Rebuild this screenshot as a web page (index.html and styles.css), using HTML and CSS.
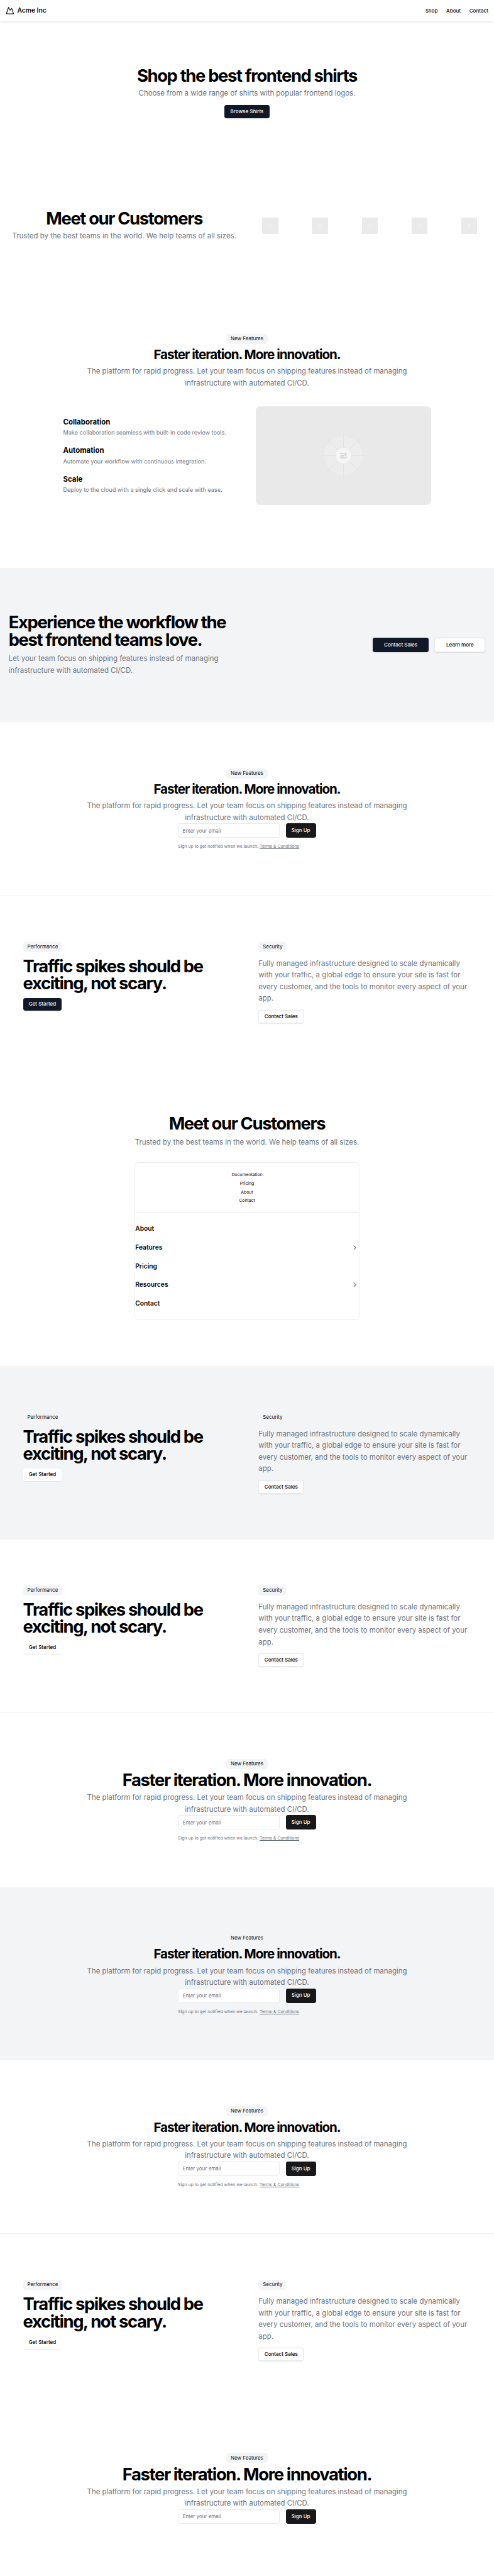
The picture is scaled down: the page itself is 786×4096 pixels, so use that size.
FILE: index.html
```html
<!DOCTYPE html>
<html lang="en">
<head>
<meta charset="utf-8">
<title>Acme Inc</title>
<link rel="stylesheet" href="styles.css">
</head>
<body>
<header class="header">
  <a class="brand"><svg class="icon" viewBox="0 0 24 24"><path d="m8 3 4 8 5-5 5 15H2L8 3z"/></svg><span>Acme Inc</span></a>
  <nav class="nav"><a>Shop</a><a>About</a><a>Contact</a></nav>
</header>
<main>
<section class="section hero">
  <h1 class="title">Shop the best frontend shirts</h1>
  <p class="lead gap-s">Choose from a wide range of shirts with popular frontend logos.</p>
  <a class="btn dark gap-l">Browse Shirts</a>
</section>

<section class="section customers">
  <div class="center">
    <h2 class="title">Meet our Customers</h2>
    <p class="lead gap-s">Trusted by the best teams in the world. We help teams of all sizes.</p>
  </div>
  <div class="logos"><i class="logo"></i><i class="logo"></i><i class="logo"></i><i class="logo"></i><i class="logo"></i></div>
</section>

<section class="section features">
  <div class="intro">
    <span class="badge">New Features</span>
    <h2 class="title small gap-s">Faster iteration. More innovation.</h2>
    <p class="lead gap-s">The platform for rapid progress. Let your team focus on shipping features instead of managing infrastructure with automated CI/CD.</p>
  </div>
  <div class="feature-grid">
    <ul class="feature-list">
      <li><h3>Collaboration</h3><p>Make collaboration seamless with built-in code review tools.</p></li>
      <li><h3>Automation</h3><p>Automate your workflow with continuous integration.</p></li>
      <li><h3>Scale</h3><p>Deploy to the cloud with a single click and scale with ease.</p></li>
    </ul>
    <div class="picture">
      <svg class="picture-art" viewBox="-90 -90 180 180">
        <defs><radialGradient id="fade" gradientUnits="userSpaceOnUse" cx="0" cy="0" r="105"><stop offset="0" stop-color="#cfcfcf"/><stop offset=".35" stop-color="#d8d8d8"/><stop offset=".72" stop-color="#e9e9e9"/></radialGradient></defs>
        <circle r="55" fill="#ededed" stroke="#e4e4e4"/>
        <path d="M-75 0H75M0-75V75M-75-75L75 75M-75 75L75-75" stroke="url(#fade)" fill="none"/>
        <circle r="23" fill="#f5f5f5" stroke="#dedede"/>
        <g fill="none" stroke="#a9a9a9" stroke-width="1.3"><rect x="-7" y="-6.5" width="14" height="13"/><path d="M-7 2.5 -3 .5 0 1 3-3 7 1M-1 0 2 3"/></g>
      </svg>
    </div>
  </div>
</section>

<section class="section muted cta">
  <div class="cta-text">
    <h2 class="title">Experience the workflow the best frontend teams love.</h2>
    <p class="lead gap-m">Let your team focus on shipping features instead of managing infrastructure with automated CI/CD.</p>
  </div>
  <div class="actions"><a class="btn dark large">Contact Sales</a><a class="btn outline large">Learn more</a></div>
</section>

<section class="section">
  <div class="intro">
    <span class="badge">New Features</span>
    <h2 class="title small gap-s">Faster iteration. More innovation.</h2>
    <p class="lead gap-s">The platform for rapid progress. Let your team focus on shipping features instead of managing infrastructure with automated CI/CD.</p>
  </div>
  <form class="signup">
    <div class="signup-row"><input class="input" type="email" placeholder="Enter your email"><button class="btn black" type="button">Sign Up</button></div>
    <p class="terms">Sign up to get notified when we launch. <a>Terms &amp; Conditions</a></p>
  </form>
</section>

<section class="section split ruled">
  <div class="column">
    <span class="badge">Performance</span>
    <h2 class="title">Traffic spikes should be exciting, not scary.</h2>
    <a class="btn dark">Get Started</a>
  </div>
  <div class="column">
    <span class="badge">Security</span>
    <p class="lead">Fully managed infrastructure designed to scale dynamically with your traffic, a global edge to ensure your site is fast for every customer, and the tools to monitor every aspect of your app.</p>
    <a class="btn outline">Contact Sales</a>
  </div>
</section>

<section class="section directory">
  <h2 class="title">Meet our Customers</h2>
  <p class="lead gap-m">Trusted by the best teams in the world. We help teams of all sizes.</p>
  <div class="card">
    <div class="card-links"><a>Documentation</a><a>Pricing</a><a>About</a><a>Contact</a></div>
    <ul class="menu">
      <li>About</li>
      <li>Features<svg class="icon chevron" viewBox="0 0 24 24"><path d="m9 18 6-6-6-6"/></svg></li>
      <li>Pricing</li>
      <li>Resources<svg class="icon chevron" viewBox="0 0 24 24"><path d="m9 18 6-6-6-6"/></svg></li>
      <li>Contact</li>
    </ul>
  </div>
</section>

<section class="section split muted">
  <div class="column">
    <span class="badge">Performance</span>
    <h2 class="title">Traffic spikes should be exciting, not scary.</h2>
    <a class="btn light">Get Started</a>
  </div>
  <div class="column">
    <span class="badge">Security</span>
    <p class="lead">Fully managed infrastructure designed to scale dynamically with your traffic, a global edge to ensure your site is fast for every customer, and the tools to monitor every aspect of your app.</p>
    <a class="btn outline">Contact Sales</a>
  </div>
</section>

<section class="section split">
  <div class="column">
    <span class="badge">Performance</span>
    <h2 class="title">Traffic spikes should be exciting, not scary.</h2>
    <a class="btn light">Get Started</a>
  </div>
  <div class="column">
    <span class="badge">Security</span>
    <p class="lead">Fully managed infrastructure designed to scale dynamically with your traffic, a global edge to ensure your site is fast for every customer, and the tools to monitor every aspect of your app.</p>
    <a class="btn outline">Contact Sales</a>
  </div>
</section>

<section class="section ruled">
  <div class="intro">
    <span class="badge">New Features</span>
    <h2 class="title gap-s">Faster iteration. More innovation.</h2>
    <p class="lead gap-s">The platform for rapid progress. Let your team focus on shipping features instead of managing infrastructure with automated CI/CD.</p>
  </div>
  <form class="signup">
    <div class="signup-row"><input class="input" type="email" placeholder="Enter your email"><button class="btn black" type="button">Sign Up</button></div>
    <p class="terms">Sign up to get notified when we launch. <a>Terms &amp; Conditions</a></p>
  </form>
</section>

<section class="section muted">
  <div class="intro">
    <span class="badge">New Features</span>
    <h2 class="title small gap-s">Faster iteration. More innovation.</h2>
    <p class="lead gap-s">The platform for rapid progress. Let your team focus on shipping features instead of managing infrastructure with automated CI/CD.</p>
  </div>
  <form class="signup">
    <div class="signup-row"><input class="input" type="email" placeholder="Enter your email"><button class="btn black" type="button">Sign Up</button></div>
    <p class="terms">Sign up to get notified when we launch. <a>Terms &amp; Conditions</a></p>
  </form>
</section>

<section class="section">
  <div class="intro">
    <span class="badge">New Features</span>
    <h2 class="title small gap-s">Faster iteration. More innovation.</h2>
    <p class="lead gap-s">The platform for rapid progress. Let your team focus on shipping features instead of managing infrastructure with automated CI/CD.</p>
  </div>
  <form class="signup">
    <div class="signup-row"><input class="input" type="email" placeholder="Enter your email"><button class="btn black" type="button">Sign Up</button></div>
    <p class="terms">Sign up to get notified when we launch. <a>Terms &amp; Conditions</a></p>
  </form>
</section>

<section class="section split ruled">
  <div class="column">
    <span class="badge">Performance</span>
    <h2 class="title">Traffic spikes should be exciting, not scary.</h2>
    <a class="btn light">Get Started</a>
  </div>
  <div class="column">
    <span class="badge">Security</span>
    <p class="lead">Fully managed infrastructure designed to scale dynamically with your traffic, a global edge to ensure your site is fast for every customer, and the tools to monitor every aspect of your app.</p>
    <a class="btn outline">Contact Sales</a>
  </div>
</section>

<section class="section last">
  <div class="intro">
    <span class="badge">New Features</span>
    <h2 class="title gap-s">Faster iteration. More innovation.</h2>
    <p class="lead gap-s">The platform for rapid progress. Let your team focus on shipping features instead of managing infrastructure with automated CI/CD.</p>
  </div>
  <form class="signup">
    <div class="signup-row"><input class="input" type="email" placeholder="Enter your email"><button class="btn black" type="button">Sign Up</button></div>
  </form>
</section>
</main>
</body>
</html>
```
FILE: styles.css
```css
/* 1rem is ten design pixels */
html { font-size: 5.7135px; }
*, *::before, *::after { box-sizing: border-box; margin: 0; padding: 0; }
body { font-family: Inter, "Liberation Sans", sans-serif; font-size: 1.6rem; line-height: 1.5; color: #09090b; background: #fff; overflow-x: hidden; }
ul { list-style: none; }

.icon { width: 2.4rem; height: 2.4rem; flex: none; fill: none; stroke: currentColor; stroke-width: 2; stroke-linecap: round; stroke-linejoin: round; }
.icon.chevron { width: 2rem; height: 2rem; }

.header { display: flex; align-items: center; justify-content: space-between; height: 6rem; padding: 0 1.6rem; box-shadow: 0 .4rem .6rem -.1rem rgba(0,0,0,.1), 0 .2rem .4rem -.2rem rgba(0,0,0,.1); }
.brand { display: flex; align-items: center; gap: .8rem; font-size: 1.8rem; font-weight: 600; }
.nav { display: flex; gap: 2.4rem; font-size: 1.4rem; font-weight: 500; }

.section { padding: 12.8rem 2.4rem; }
.muted { background: #f3f4f6; }
.ruled { border-top: 1px solid #eeeff1; padding-top: 12.75rem; }
.center { text-align: center; }

.title { font-size: 4.8rem; line-height: 1; font-weight: 700; letter-spacing: -.05em; color: #000; }
.title.small { font-size: 3.6rem; line-height: 1.25; }
.lead { font-size: 2rem; line-height: 1.625; color: #6b7280; }
.gap-s { margin-top: .8rem; }
.gap-m { margin-top: 1.2rem; }
.gap-l { margin-top: 1.6rem; }

.badge { display: block; width: fit-content; padding: .4rem 1.2rem; border-radius: .8rem; background: #f3f4f6; font-size: 1.4rem; line-height: 2rem; }
.btn { display: flex; align-items: center; justify-content: center; width: fit-content; height: 3.6rem; padding: 0 1.6rem; border: 0; border-radius: .6rem; font: 500 1.4rem/2rem Inter, "Liberation Sans", sans-serif; white-space: nowrap; box-shadow: 0 .1rem .3rem rgba(0,0,0,.1); }
.btn.dark { background: #111827; color: #f9fafb; }
.btn.light { background: #fff; color: #000; box-shadow: 0 .1rem .2rem rgba(0,0,0,.08); }
.btn.outline { background: #fff; color: #000; padding: 0 1.5rem; border: 1px solid #e9eaec; }
.btn.black { background: #18181b; color: #fafafa; height: 4rem; box-shadow: none; }
.btn.large { height: 4rem; padding: 0 3.2rem; }
.btn.outline.large { padding: 0 3.1rem; }

.hero { display: flex; flex-direction: column; align-items: center; }

.customers { display: grid; grid-template-columns: 1fr 1fr; gap: 4rem; align-items: center; }
.logos { display: grid; grid-template-columns: repeat(5, 1fr); gap: 4.8rem; justify-items: center; }
.logo { width: 4.5rem; height: 4.5rem; background: radial-gradient(circle, #f2f2f2 0, #eaeaea .5rem); }

.intro { display: flex; flex-direction: column; align-items: center; width: 90rem; margin: 0 auto; text-align: center; }
.features { display: flow-root; }
.feature-grid { display: grid; grid-template-columns: 1fr 1fr; gap: 4.8rem; align-items: center; width: 102.4rem; margin: 4.8rem auto; }
.feature-list { display: grid; gap: 2.4rem; }
.feature-list li { display: grid; gap: .4rem; }
.feature-list h3 { font-size: 2rem; line-height: 2.8rem; font-weight: 700; color: #000; }
.feature-list p { line-height: 2.4rem; color: #6b7280; }
.picture { display: flex; align-items: center; justify-content: center; height: 27.45rem; border-radius: 1.2rem; background: #e9e9e9; }
.picture-art { width: 18rem; height: 18rem; }

.cta { display: flex; align-items: center; justify-content: space-between; }
.cta-text { width: 64rem; }
.actions { display: flex; gap: 1.6rem; }

.signup { width: 38.4rem; margin: 0 auto; }
.signup-row { display: flex; gap: 1.6rem; }
.input { flex: 1; min-width: 0; height: 4rem; padding: 0 1.1rem; border: 1px solid #e9eaec; border-radius: .6rem; background: #fff; font: 400 1.4rem/2rem Inter, "Liberation Sans", sans-serif; }
.input::placeholder { color: #71717a; opacity: 1; }
.terms { margin-top: 1.6rem; font-size: 1.2rem; line-height: 1.6rem; color: #6b7280; }
.terms a { text-decoration: underline; text-underline-offset: .2rem; }

.split { display: grid; grid-template-columns: 1fr 1fr; gap: 6.4rem; padding-left: 6.4rem; padding-right: 6.4rem; }
.column { display: flex; flex-direction: column; gap: 1.6rem; }

.directory { display: flex; flex-direction: column; align-items: center; }
.card { width: 62.6rem; height: 43.9rem; margin-top: 4rem; border: 1px solid #eeeff1; border-radius: 1.2rem; }
.card-links { display: flex; flex-direction: column; align-items: center; gap: .8rem; height: 13.7rem; padding-top: 2.4rem; border-bottom: 1px solid #e9eaec; font-size: 1.2rem; line-height: 1.6rem; }
.menu { padding-top: 2rem; }
.menu li { display: flex; align-items: center; justify-content: space-between; height: 5.2rem; font-size: 1.8rem; font-weight: 600; }

.last { padding-bottom: 14.4rem; }
```
